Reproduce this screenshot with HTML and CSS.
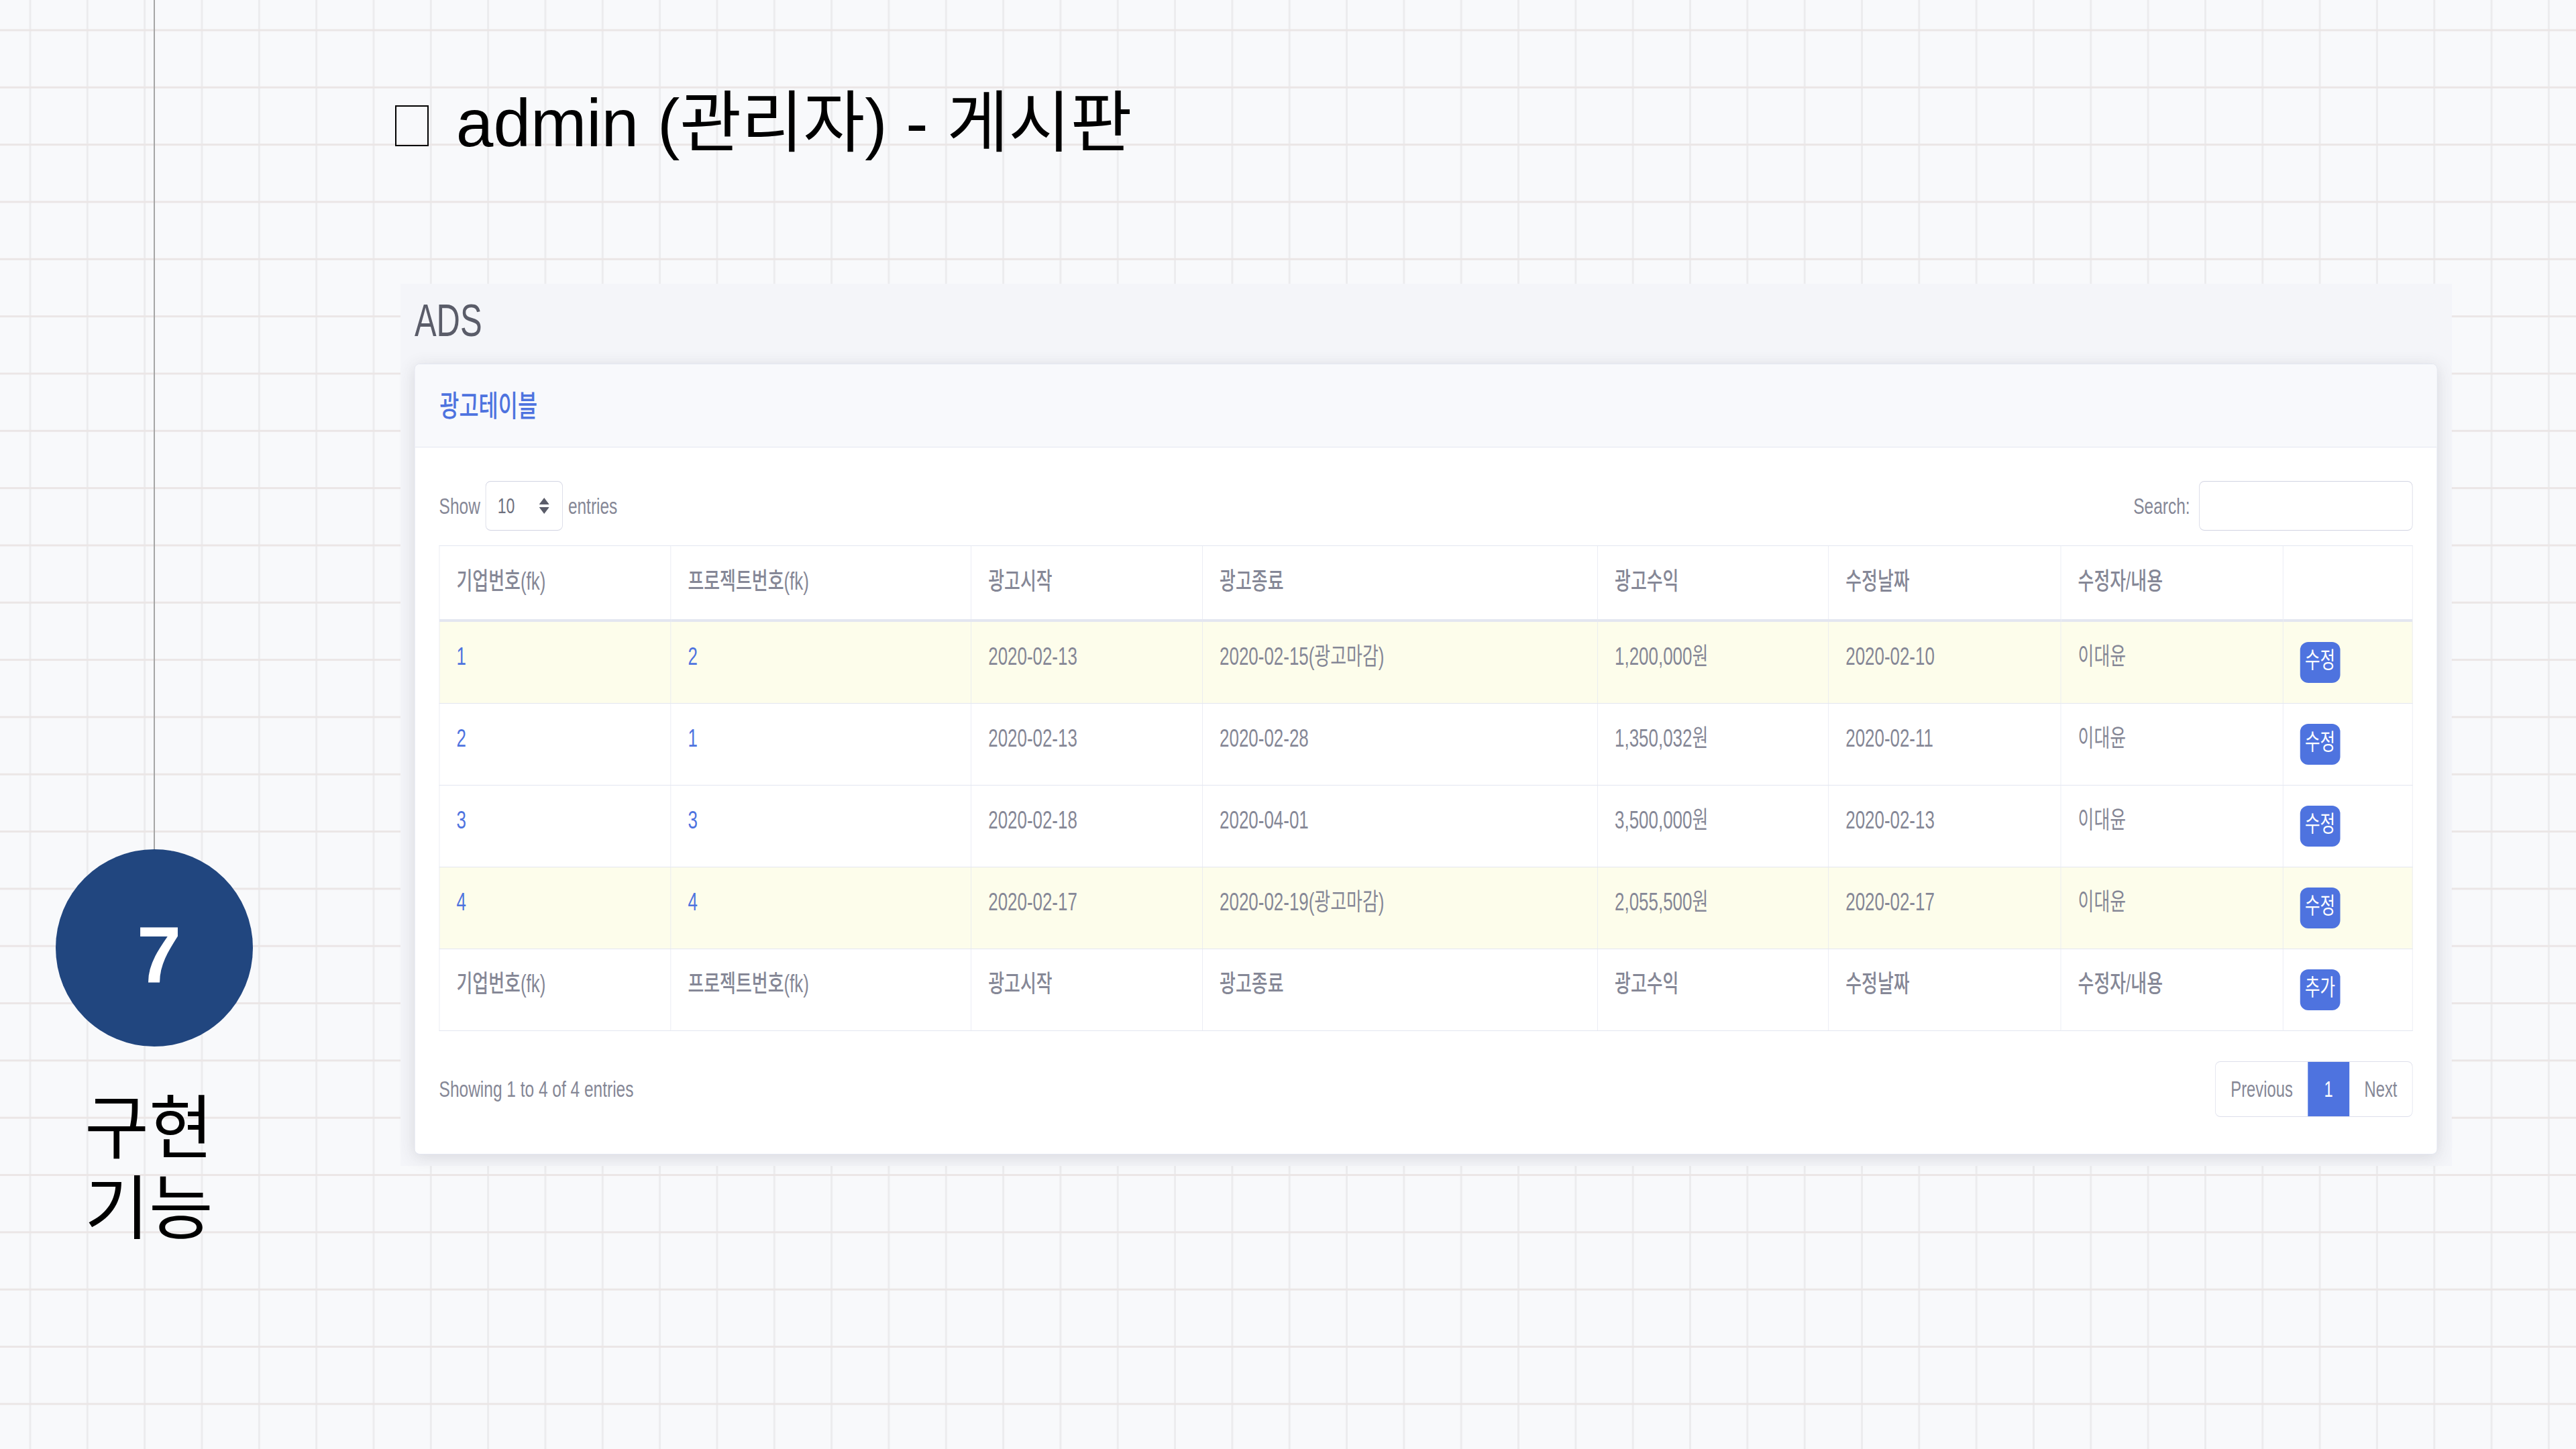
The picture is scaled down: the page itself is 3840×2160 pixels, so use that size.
FILE: index.html
```html
<!DOCTYPE html>
<html lang="ko">
<head>
<meta charset="utf-8">
<title>admin (관리자) - 게시판</title>
<link rel="stylesheet" href="styles.css">
</head>
<body>
<div class="slide">
  <aside class="rail">
    <div class="rail-line"></div>
    <div class="badge">7</div>
    <div class="rail-label"><div class="rail-word">구현</div><div class="rail-word">기능</div></div>
  </aside>
  <main class="content">
    <h1 class="title"><span class="tofu"></span> admin (관리자) - 게시판</h1>
    <section class="shot">
      <div class="ads">ADS</div>
      <div class="card">
        <div class="card-header"><h6 class="card-title">광고테이블</h6></div>
        <div class="card-body">
          <div class="controls">
            <div class="len">Show <span class="select"><span class="select-val">10</span><svg class="caret" width="21" height="24" viewBox="0 0 21 24"><path d="M0 10 L21 10 L10.5 0 Z M0 14 L21 14 L10.5 24 Z" fill="#5a5c69"/></svg></span> entries</div>
            <div class="search">Search: <span class="input"></span></div>
          </div>
          <table class="grid">
            <colgroup>
              <col class="c1"><col class="c2"><col class="c3"><col class="c4"><col class="c5"><col class="c6"><col class="c7"><col class="c8">
            </colgroup>
            <thead>
              <tr><th>기업번호(fk)</th><th>프로젝트번호(fk)</th><th>광고시작</th><th>광고종료</th><th>광고수익</th><th>수정날짜</th><th>수정자/내용</th><th></th></tr>
            </thead>
            <tbody>
              <tr class="hl"><td class="link">1</td><td class="link">2</td><td>2020-02-13</td><td>2020-02-15(광고마감)</td><td>1,200,000원</td><td>2020-02-10</td><td>이대윤</td><td><span class="btn">수정</span></td></tr>
              <tr><td class="link">2</td><td class="link">1</td><td>2020-02-13</td><td>2020-02-28</td><td>1,350,032원</td><td>2020-02-11</td><td>이대윤</td><td><span class="btn">수정</span></td></tr>
              <tr><td class="link">3</td><td class="link">3</td><td>2020-02-18</td><td>2020-04-01</td><td>3,500,000원</td><td>2020-02-13</td><td>이대윤</td><td><span class="btn">수정</span></td></tr>
              <tr class="hl"><td class="link">4</td><td class="link">4</td><td>2020-02-17</td><td>2020-02-19(광고마감)</td><td>2,055,500원</td><td>2020-02-17</td><td>이대윤</td><td><span class="btn">수정</span></td></tr>
            </tbody>
            <tfoot>
              <tr><th>기업번호(fk)</th><th>프로젝트번호(fk)</th><th>광고시작</th><th>광고종료</th><th>광고수익</th><th>수정날짜</th><th>수정자/내용</th><th><span class="btn">추가</span></th></tr>
            </tfoot>
          </table>
          <div class="foot">
            <div class="info">Showing 1 to 4 of 4 entries</div>
            <div class="pager"><span class="pg pg-prev">Previous</span><span class="pg pg-cur">1</span><span class="pg pg-next">Next</span></div>
          </div>
        </div>
      </div>
    </section>
  </main>
</div>
</body>
</html>
```

FILE: styles.css
```css
html, body {
  margin: 0;
  padding: 0;
  overflow: hidden;
}

body {
  width: 3840px;
  height: 2160px;
  background-color: #f8f9fb;
  background-image:
    linear-gradient(to bottom, #ebe6e6 3px, transparent 3px),
    linear-gradient(to right, #ececee 3px, transparent 3px);
  background-size: 85.333px 85.333px;
  background-position: 43.5px 43.5px;
  font-family: "Liberation Sans", "Noto Sans CJK KR", sans-serif;
  color: #000;
}

.slide {
  display: flex;
  height: 2160px;
}

/* left rail */
.rail {
  width: 460px;
  flex: none;
  display: flex;
  flex-direction: column;
  align-items: center;
}

.rail-line {
  width: 2px;
  height: 1266px;
  background: #a6a6a6;
}

.badge {
  width: 294px;
  height: 294px;
  box-sizing: border-box;
  padding: 18px 0 0 14px;
  border-radius: 50%;
  background: #21467f;
  color: #fff;
  display: flex;
  align-items: center;
  justify-content: center;
  font-family: "Liberation Sans", sans-serif;
  font-weight: 700;
  font-size: 119px;
  line-height: 119px;
}

.rail-label {
  margin-top: 54px;
  padding-right: 16px;
  font-family: "Noto Sans CJK KR", sans-serif;
  font-size: 104px;
  text-align: center;
  color: #000;
}

.rail-word {
  height: 120px;
  line-height: 120px;
}

/* main */
.content {
  flex: 1;
  min-width: 0;
  padding-left: 129px;
}

.title {
  margin: 0;
  padding-top: 126px;
  font-family: "Liberation Sans", "Noto Sans CJK KR", sans-serif;
  font-weight: 400;
  font-size: 100px;
  line-height: 114px;
  white-space: nowrap;
  color: #000;
}

.tofu {
  display: inline-block;
  width: 46px;
  height: 57px;
  border: 2px solid #000;
  margin-right: 13px;
}

/* embedded admin screenshot, squeezed horizontally */
.shot {
  width: 4247px;
  box-sizing: border-box;
  margin: 183px 0 0 8px;
  padding: 13px 30px 17px 29px;
  background: #f4f5f9;
  transform: scaleX(0.72);
  transform-origin: 0 0;
  font-family: "Liberation Sans", "Noto Sans CJK KR", sans-serif;
  color: #858796;
}

.ads {
  font-size: 68px;
  line-height: 82px;
  color: #5a5c69;
  margin-bottom: 24px;
}

.card {
  background: #fff;
  border: 1px solid #e3e6f0;
  border-radius: 11px / 8px;
  box-shadow: 0 4px 28px rgba(58, 59, 69, 0.15);
  overflow: hidden;
}

.card-header {
  height: 124px;
  box-sizing: border-box;
  padding: 0 51px 6px;
  display: flex;
  align-items: center;
  background: #f8f9fc;
  border-bottom: 1px solid #e3e6f0;
}

.card-title {
  margin: 0;
  font-size: 44px;
  font-weight: 500;
  color: #4e73df;
}

.card-body {
  padding: 50px 50px 55px;
}

.controls {
  display: flex;
  justify-content: space-between;
  align-items: center;
  height: 74px;
  font-size: 34px;
  color: #858796;
}

.len {
  display: flex;
  align-items: center;
  gap: 11px;
}

.select {
  width: 160px;
  height: 74px;
  box-sizing: border-box;
  border: 1px solid #d1d3e2;
  border-radius: 11px / 8px;
  display: flex;
  align-items: center;
  padding-left: 24px;
}

.select-val {
  width: 86px;
  font-size: 32px;
  color: #6e707e;
}

.caret {
  display: block;
}

.search {
  display: flex;
  align-items: center;
  gap: 19px;
}

.input {
  width: 442px;
  height: 74px;
  box-sizing: border-box;
  border: 1px solid #d1d3e2;
  border-radius: 11px / 8px;
  background: #fff;
}

/* table */
.grid {
  width: 100%;
  margin-top: 22px;
  border-collapse: collapse;
  table-layout: fixed;
  border: 1px solid #e3e6f0;
  font-size: 36px;
  color: #858796;
}

.c1 { width: 479px; }
.c2 { width: 622px; }
.c3 { width: 479px; }
.c4 { width: 818px; }
.c5 { width: 478px; }
.c6 { width: 481px; }
.c7 { width: 460px; }

.grid th,
.grid td {
  border: 1px solid #e3e6f0;
  padding: 30px 35px;
  line-height: 43px;
  text-align: left;
  vertical-align: top;
  white-space: nowrap;
  font-weight: 400;
}

.grid th {
  font-weight: 500;
  color: #858796;
}

.grid thead th {
  padding-top: 31px;
  padding-bottom: 35px;
  border-bottom: 4px solid #e3e6f0;
}

.grid .link {
  color: #4e73df;
}

.grid .hl td {
  background: #fdfdeb;
}

.btn {
  display: inline-block;
  vertical-align: top;
  background: #4e73df;
  color: #fff;
  font-size: 34px;
  font-weight: 400;
  line-height: 41px;
  padding: 7px 10px 13px;
  border-radius: 17px / 12px;
}

/* footer */
.foot {
  display: flex;
  justify-content: space-between;
  align-items: center;
  margin-top: 45px;
}

.info {
  font-size: 34px;
  color: #858796;
}

.pager {
  display: flex;
  height: 83px;
  box-sizing: border-box;
  border: 1px solid #dddfeb;
  border-radius: 11px / 8px;
  overflow: hidden;
  font-size: 33px;
}

.pg {
  display: flex;
  align-items: center;
  padding: 0 31px;
  color: #858796;
}

.pg-cur {
  padding: 0 34px;
  background: #4e73df;
  color: #fff;
}
```
